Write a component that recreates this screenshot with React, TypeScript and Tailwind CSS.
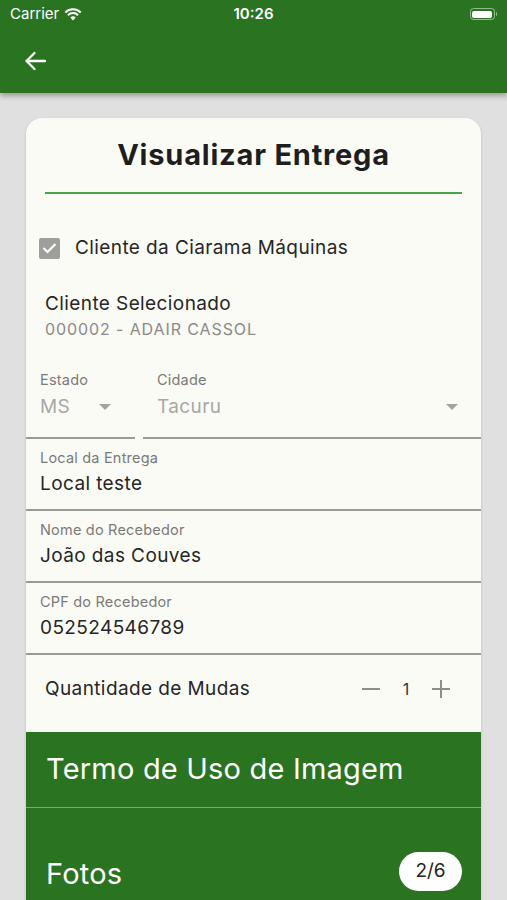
import React from "react";

const font = { fontFamily: "Inter, 'Noto Sans', sans-serif" };

function Field({ label, value }: { label: string; value: string }) {
  return (
    <div className="h-[72px] border-b-2 border-[#9a9a96] px-[14px] pt-[10px]">
      <div className="text-[14.5px] leading-[18px] tracking-[0.2px] text-[#7a7a78]">{label}</div>
      <div className="mt-[5px] text-[19px] leading-[24px] tracking-[0.4px] text-[#262626]">{value}</div>
    </div>
  );
}

function Caret() {
  return (
    <svg width="12" height="6" viewBox="0 0 12 6">
      <path d="M0 0 L12 0 L6 6 Z" fill="#a3a3a0" />
    </svg>
  );
}

export default function App() {
  return (
    <div className="w-[507px] h-[900px] overflow-hidden bg-[#e0e0e0] relative" style={font}>
      {/* App bar */}
      <div className="bg-[#2a7320] h-[93px] shadow-[0_3px_5px_rgba(0,0,0,0.3)] relative z-10">
        <div className="h-[28px] flex items-center justify-between px-[10px] text-white">
          <div className="flex items-center gap-[5px] text-[15px]">
            <span>Carrier</span>
            <svg width="18" height="13" viewBox="0 0 18 13">
              <path d="M9 12.5 L6.3 9.6 A3.8 3.8 0 0 1 11.7 9.6 Z" fill="white" />
              <path d="M3.9 7.2 A7.2 7.2 0 0 1 14.1 7.2" stroke="white" strokeWidth="2" fill="none" />
              <path d="M1.3 4.5 A11 11 0 0 1 16.7 4.5" stroke="white" strokeWidth="2" fill="none" />
            </svg>
          </div>
          <div className="absolute left-0 right-0 text-center text-[15px] font-semibold pointer-events-none">10:26</div>
          <div className="flex items-center">
            <div className="w-[25px] h-[12px] rounded-[3.5px] border border-[rgba(255,255,255,0.5)] p-[1.5px]">
              <div className="w-full h-full bg-white rounded-[2px]" />
            </div>
            <div className="w-[1.5px] h-[4px] bg-[rgba(255,255,255,0.5)] ml-[1px] rounded-r" />
          </div>
        </div>
        <div className="pl-[24px] pt-[23px]">
          <svg width="22" height="20" viewBox="0 0 22 20">
            <path d="M21 10 H2.5 M10.5 2 L2.5 10 L10.5 18" stroke="white" strokeWidth="2.3" fill="none" strokeLinecap="round" strokeLinejoin="round" />
          </svg>
        </div>
      </div>

      {/* Card */}
      <div className="mx-[26px] mt-[25px] bg-[#fbfbf6] rounded-t-[16px] overflow-hidden shadow-[0_1px_3px_rgba(0,0,0,0.15)]">
        <div className="pt-[20px] text-center text-[29px] leading-[34px] font-bold text-[#1e1e1e] tracking-[0.8px]">
          Visualizar Entrega
        </div>
        <div className="mx-[19px] mt-[20px] h-[2px] bg-[#47a447]" />

        <div className="flex items-center mt-[40px] pl-[13px]">
          <div className="w-[21px] h-[21px] bg-[#9e9e9c] rounded-[2px] flex items-center justify-center">
            <svg width="15" height="12" viewBox="0 0 15 12">
              <path d="M1.5 6 L5.5 10 L13.5 2" stroke="#fbfbf6" strokeWidth="2.2" fill="none" />
            </svg>
          </div>
          <span className="ml-[15px] text-[19px] tracking-[0.4px] text-[#262626]">Cliente da Ciarama Máquinas</span>
        </div>

        <div className="mt-[29px] px-[19px]">
          <div className="text-[19px] leading-[24px] tracking-[0.4px] text-[#262626]">Cliente Selecionado</div>
          <div className="mt-[3px] text-[16px] leading-[20px] text-[#8a8a88] tracking-[0.9px]">000002 - ADAIR CASSOL</div>
        </div>

        <div className="mt-[28px] flex h-[72px]">
          <div className="w-[109px] border-b-2 border-[#9a9a96] pl-[14px] pr-[24px] pt-[4px]">
            <div className="text-[14.5px] leading-[18px] tracking-[0.2px] text-[#7a7a78]">Estado</div>
            <div className="mt-[6px] flex items-center justify-between">
              <span className="text-[19px] leading-[24px] tracking-[0.4px] text-[#a8a8a5]">MS</span>
              <Caret />
            </div>
          </div>
          <div className="flex-1 ml-[8px] border-b-2 border-[#9a9a96] pl-[14px] pr-[23px] pt-[4px]">
            <div className="text-[14.5px] leading-[18px] tracking-[0.2px] text-[#7a7a78]">Cidade</div>
            <div className="mt-[6px] flex items-center justify-between">
              <span className="text-[19px] leading-[24px] tracking-[0.4px] text-[#a8a8a5]">Tacuru</span>
              <Caret />
            </div>
          </div>
        </div>

        <Field label="Local da Entrega" value="Local teste" />
        <Field label="Nome do Recebedor" value="João das Couves" />
        <Field label="CPF do Recebedor" value="052524546789" />

        <div className="h-[77px] flex items-center pl-[19px] pr-[30px] pb-[8px]">
          <span className="flex-1 text-[19px] tracking-[0.4px] text-[#262626]">Quantidade de Mudas</span>
          <svg width="20" height="4" viewBox="0 0 20 4" className="mr-[21px]">
            <path d="M1 2 H19" stroke="#8d8d8a" strokeWidth="2" />
          </svg>
          <span className="text-[16px] text-[#333] w-[8px] text-center">1</span>
          <svg width="20" height="20" viewBox="0 0 20 20" className="ml-[21px]">
            <path d="M1 10 H19 M10 1 V19" stroke="#8d8d8a" strokeWidth="2" />
          </svg>
        </div>

        <div className="bg-[#2a7320] h-[76px] flex items-center pl-[20px] border-b border-[#7fa878]">
          <span className="text-white text-[29px] tracking-[0.2px]">Termo de Uso de Imagem</span>
        </div>
        <div className="bg-[#2a7320] h-[120px] flex items-start pl-[20px] pr-[19px] pt-[44px] justify-between">
          <span className="text-white text-[29px] tracking-[0.2px]">Fotos</span>
          <span className="bg-white rounded-full w-[63px] h-[39px] flex items-center justify-center text-[19px] text-[#222]">2/6</span>
        </div>
      </div>
    </div>
  );
}
